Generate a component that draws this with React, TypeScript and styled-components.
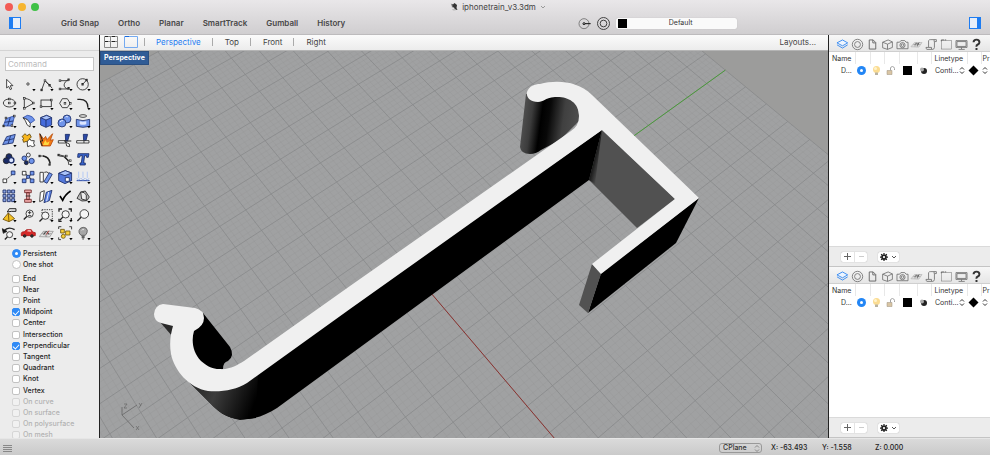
import React from "react";
import styled, { createGlobalStyle, css } from "styled-components";

const GlobalStyle = createGlobalStyle`
  * { box-sizing: border-box; }
  html, body { margin: 0; padding: 0; }
  body {
    font-family: Inter, "Liberation Sans", sans-serif;
    font-size: 8px;
    line-height: 10px;
    color: #333;
    background: #ececec;
  }
  button, input, select { font: inherit; color: inherit; margin: 0; }
  button { border: 0; padding: 0; background: none; }
  svg { display: block; }
`;

/* ---------- window frame ---------- */

const Window = styled.div`
  display: flex;
  flex-direction: column;
  height: 100vh;
  overflow: hidden;
`;

const Header = styled.header`
  flex: none;
  height: 35px;
  background: linear-gradient(#e9e7e9, #d0ced0);
  border-bottom: 1px solid #bdbbbd;
`;

const TitleBar = styled.div`
  display: grid;
  grid-template-columns: 1fr auto 1fr;
  align-items: center;
  height: 13px;
  padding: 0 5px;
`;

const Lights = styled.div`
  display: flex;
  gap: 5px;
`;

const Light = styled.button<{ $color: string }>`
  width: 8px;
  height: 8px;
  border-radius: 50%;
  background: ${(p) => p.$color};
`;

const Title = styled.h1`
  display: flex;
  align-items: center;
  gap: 4px;
  margin: 0;
  padding-left: 6px;
  font-size: 8px;
  font-weight: 400;
  line-height: 12px;
  color: #444;
`;

const Toolbar = styled.div`
  display: flex;
  align-items: center;
  height: 20px;
  padding: 0 9px;
`;

const Toggles = styled.nav`
  display: flex;
  gap: 19px;
  margin-left: 40px;
`;

const TextButton = styled.button`
  font-weight: 600;
  color: #484848;
`;

const Spacer = styled.div`
  flex: 1;
`;

const CurrentLayer = styled.div`
  display: flex;
  align-items: center;
  gap: 6px;
`;

const LayerButton = styled.button`
  display: grid;
  grid-template-columns: 9px 1fr;
  align-items: center;
  width: 121px;
  height: 11px;
  padding: 0 2px;
  border-radius: 2px;
  background: #fafafa;
  box-shadow: 0 0 1px #aaa;
  font-size: 7px;
`;

const Swatch = styled.span`
  display: block;
  width: 9px;
  height: 9px;
  background: #000;
`;

const Body = styled.div`
  display: flex;
  flex: 1;
  min-height: 0;
`;

/* ---------- left sidebar ---------- */

const Sidebar = styled.aside`
  display: flex;
  flex-direction: column;
  flex: none;
  width: 100px;
  overflow: hidden;
  background: #ececec;
  border-right: 1px solid #222;
`;

const SidebarTop = styled.div`
  flex: none;
  height: 16px;
  background: linear-gradient(#fafafa, #ededed);
  border-bottom: 1px solid #d4d4d4;
`;

const CommandInput = styled.input`
  flex: none;
  height: 14px;
  margin: 6px 5px 4px;
  padding: 0 2px;
  border: 1px solid #c6c6c6;
  border-radius: 0;
  background: #fff;
  font-size: 8px;
  outline: none;
  &::placeholder { color: #bbb; opacity: 1; }
`;

const ToolGrid = styled.div`
  flex: none;
  display: grid;
  grid-template-columns: repeat(5, 1fr);
  grid-auto-rows: 1fr;
  height: 168px;
  margin-right: 6px;
`;

const ToolButton = styled.button`
  display: grid;
  place-items: center;
  min-width: 0;
  min-height: 0;
  svg { width: 100%; height: 100%; overflow: visible; }
`;

const Snaps = styled.div`
  display: flex;
  flex-direction: column;
  flex: 1;
  min-height: 0;
  overflow: hidden;
  margin-top: 2px;
  padding: 2px 0 0 12px;
  border-top: 1px solid #dcdcdc;
`;

const SnapList = styled.div<{ $height: number }>`
  flex: none;
  display: grid;
  grid-auto-rows: 1fr;
  height: ${(p) => p.$height}px;
  margin-bottom: 3px;
`;

const SnapLabel = styled.label<{ $off?: boolean }>`
  display: flex;
  align-items: center;
  gap: 3px;
  font-size: 7px;
  font-weight: 500;
  color: ${(p) => (p.$off ? "#b2b2b2" : "#262626")};
`;

const tick = css`
  appearance: none;
  flex: none;
  width: 8px;
  height: 8px;
  border: 1px solid #c2c2c2;
  background: #fff;
  &:disabled { background-color: #f1f1f1; border-color: #d6d6d6; }
`;

const Check = styled.input`
  ${tick}
  display: grid;
  place-items: center;
  border-radius: 2px;
  &:checked { background-color: #2f8af5; border-color: #2f8af5; }
  &:checked::before {
    content: "";
    width: 5px;
    height: 3px;
    border: solid #fff;
    border-width: 0 0 1px 1px;
    transform: rotate(-48deg);
  }
`;

const Radio = styled.input`
  ${tick}
  display: grid;
  place-items: center;
  width: 9px;
  height: 9px;
  margin-right: -1px;
  border-radius: 50%;
  &:checked { background-color: #2f8af5; border-color: #2f8af5; }
  &:checked::before {
    content: "";
    width: 3px;
    height: 3px;
    border-radius: 50%;
    background: #fff;
  }
`;

/* ---------- viewport ---------- */

const Center = styled.main`
  display: flex;
  flex-direction: column;
  flex: 1;
  min-width: 0;
`;

const Tabs = styled.div`
  display: flex;
  align-items: center;
  flex: none;
  height: 16px;
  padding: 0 12px 1px 4px;
  background: linear-gradient(#fbfbfb, #ececec);
  border-bottom: 1px solid #b4b4b4;
  & > button + button { margin-left: 6px; }
`;

const Tab = styled.button<{ $active?: boolean }>`
  color: ${(p) => (p.$active ? "#1d7cf2" : "#444")};
`;

const Divider = styled.span`
  width: 1px;
  height: 8px;
  margin: 0 12px 0 11px;
  background: #aaa;
  &:first-of-type { margin-left: 6px; margin-right: 11px; }
`;

const View = styled.div`
  position: relative;
  flex: 1;
  min-height: 0;
  background: #9c9c9b;
`;

const Scene = styled.svg`
  width: 100%;
  height: 100%;
`;

const ViewLabel = styled.span`
  position: absolute;
  top: 0;
  left: 0;
  padding: 1px 3px;
  border: 1px solid #2b4f80;
  background: #305c96;
  color: #fff;
  font-size: 7px;
  font-weight: 700;
`;

/* ---------- right panels ---------- */

const Panels = styled.aside`
  display: flex;
  flex-direction: column;
  flex: none;
  width: 162px;
  overflow: hidden;
  background: #fff;
  border-left: 1px solid #222;
`;

const Panel = styled.section<{ $share: number }>`
  display: flex;
  flex-direction: column;
  flex: ${(p) => p.$share} 1 0;
  min-height: 0;
`;

const PanelTabs = styled.div`
  display: flex;
  align-items: center;
  justify-content: space-between;
  flex: none;
  height: 17px;
  padding: 2px 7px 0 7px;
  background: linear-gradient(#f7f7f7, #e6e6e6);
  border-bottom: 1px solid #cfcfcf;
  svg { width: 13px; height: 13px; }
`;

const PanelContent = styled.div`
  flex: 1;
  min-height: 0;
  overflow: hidden;
  background: #fff;
`;

const LayerTable = styled.table`
  width: 100%;
  table-layout: fixed;
  border-collapse: collapse;
  font-size: 7px;
  line-height: 9px;
`;

const Th = styled.th`
  height: 12px;
  padding: 0 0 0 3px;
  border-right: 1px solid #e8e8e8;
  font-weight: 400;
  text-align: left;
  white-space: nowrap;
  overflow: hidden;
  &:last-child { padding-left: 1px; border-right: 0; }
`;

const Td = styled.td<{ $indent?: number }>`
  height: 13px;
  padding: 0 0 0 ${(p) => p.$indent ?? 3}px;
  white-space: nowrap;
  svg { width: 11px; height: 11px; }
`;

const LineCell = styled.div`
  display: flex;
  align-items: center;
  justify-content: space-between;
  padding-right: 2px;
`;

const StepperDrawing = styled.svg`
  && {
    flex: none;
    width: 6px;
    height: 9px;
  }
`;

const PanelFooter = styled.footer`
  display: flex;
  align-items: center;
  gap: 11px;
  flex: none;
  height: 21px;
  padding-left: 12px;
  background: #ececec;
  border-top: 1px solid #dadada;
  border-bottom: 1px solid #c4c4c4;
`;

const ButtonPair = styled.div`
  display: flex;
  height: 10px;
  border-radius: 2px;
  background: #fff;
  box-shadow: 0 0 1px #999;
`;

const FooterButton = styled.button<{ $wide?: boolean }>`
  display: flex;
  align-items: center;
  justify-content: center;
  gap: 3px;
  width: ${(p) => (p.$wide ? 21 : 13)}px;
  height: 10px;
  & + & { border-left: 1px solid #e4e4e4; }
`;

/* ---------- status bar ---------- */

const StatusBar = styled.footer`
  display: flex;
  align-items: center;
  flex: none;
  height: 17px;
  padding: 2px 3px 0;
  background: linear-gradient(#dadada, #cacaca);
  border-top: 1px solid #e6e6e6;
  font-size: 7px;
  font-weight: 500;
`;

const PlanePicker = styled.label`
  display: flex;
  align-items: center;
  width: 43px;
  height: 10px;
  margin-left: auto;
  margin-right: 9px;
  padding: 0 1px 0 3px;
  border: 1px solid #999;
  border-radius: 3px;
  select {
    appearance: none;
    flex: 1;
    min-width: 0;
    padding: 0;
    border: 0;
    background: none;
    outline: none;
  }
`;

const Coord = styled.output<{ $width: number }>`
  width: ${(p) => p.$width}px;
  color: #222;
`;

/* ---------- drawings: construction plane grid ---------- */

const ORIGIN = { x: 425, y: 286 };
const VANISH_U = { x: -880, y: -1250 };
const VANISH_V = { x: 2562, y: -1250 };
const STEP_U = -0.01452;
const STEP_V = 0.01168;
const EXTENT = 14;

function project(u: number, v: number) {
  const a = STEP_U * u;
  const b = STEP_V * v;
  const w = 1 + a + b;
  const x = (ORIGIN.x + a * VANISH_U.x + b * VANISH_V.x) / w;
  const y = (ORIGIN.y + a * VANISH_U.y + b * VANISH_V.y) / w;
  return `${x.toFixed(2)} ${y.toFixed(2)}`;
}

const segment = (u1: number, v1: number, u2: number, v2: number) =>
  `M${project(u1, v1)}L${project(u2, v2)}`;

function gridLines(major: boolean) {
  let d = "";
  for (let i = -EXTENT * 5; i <= EXTENT * 5; i++) {
    if ((i % 5 === 0) !== major) continue;
    const t = i / 5;
    d += segment(t, -EXTENT, t, EXTENT) + segment(-EXTENT, t, EXTENT, t);
  }
  return d;
}

const MINOR = gridLines(false);
const MAJOR = gridLines(true);
const PLANE = `M${project(-14, -14)}L${project(-14, 14)}L${project(14, 14)}L${project(14, -14)}Z`;

function Model() {
  return (
    <Scene viewBox="100 51 728 387" preserveAspectRatio="xMidYMid slice" role="img" aria-label="Perspective view of the clip model">
      <defs>
        <linearGradient id="tube" gradientUnits="userSpaceOnUse" x1="522" y1="120" x2="580" y2="128">
          <stop offset="0" stopColor="#505050" />
          <stop offset=".15" stopColor="#3c3c3c" />
          <stop offset=".32" stopColor="#000" />
          <stop offset=".45" stopColor="#080808" />
          <stop offset=".7" stopColor="#404040" />
          <stop offset="1" stopColor="#505050" />
        </linearGradient>
        <linearGradient id="bend" gradientUnits="userSpaceOnUse" x1="200" y1="385" x2="254" y2="405">
          <stop offset="0" stopColor="#2c2c2c" />
          <stop offset=".3" stopColor="#3c3c3c" />
          <stop offset="1" stopColor="#000" />
        </linearGradient>
        <linearGradient id="sliver" gradientUnits="userSpaceOnUse" x1="592" y1="160" x2="600" y2="162">
          <stop offset="0" stopColor="#080808" />
          <stop offset="1" stopColor="#484848" />
        </linearGradient>
      </defs>
      <path d={PLANE} fill="#a0a1a2" />
      <path d={MINOR} fill="none" stroke="#929394" strokeWidth=".5" opacity=".5" />
      <path d={MAJOR} fill="none" stroke="#88898a" strokeWidth=".8" />
      <path d={segment(0, 0, 14, 0)} stroke="#8c3330" strokeWidth="1" />
      <path d={segment(0, 0, 0, 14)} stroke="#4a9a3a" strokeWidth="1" />

      <path d="M526 94 520 147Q521 154 530 154 536 154 541 150L560 140 580 120 577 104 565 96 548 97Z" fill="url(#tube)" />
      <path d="M602 130 675 199 637 228 589 180Z" fill="#515151" />
      <path d="M602 130 589 180 595 184Z" fill="url(#sliver)" />
      <path d="M602 130 589 180 277 408C262 418 243 423 227 416 220 413 215 408 210 403L188 381 246 378 350 305Z" fill="#000" />
      <path d="M188 381 210 403C217 411 225 417 240 420L256 418 258 374 230 386Z" fill="url(#bend)" />
      <path d="M160 322 172 336 176 322Z" fill="#292929" />
      <path d="M203 313 230 347Q235 356 228 361 223 362 223 369L205 370 188 350 192 328Z" fill="#000" />
      <path d="M601 273 699 198 676 243 588 313Z" fill="#000" />
      <path d="M592 264 601 274 588 313 579 305Z" fill="#525252" />
      <path
        d="M163 304 195 308Q204 310 204 318 204 326 194 331C191 341 193 353 201 361 208 367 213 369 219 369 230 370 237 365 244 361L350 286 571 131Q579 126 579 116C579 101 566 96 555 97 544 98 544 102 538 102 530 102 526 97 527 92 529 86 535 84 540 84 555 80 577 80 592 95L699 198 601 274 592 264 675 199 602 130 350 309 247 383C236 390 222 392 208 391 189 388 174 370 171 354 169 342 171 333 173 326L161 323Q154 321 154 314 155 305 163 304Z"
        fill="#f0f0f0"
      />
      <g fill="none" stroke="#666" strokeWidth=".8">
        <path d="M122 407V415L137 405M122 415 134 428" />
        <path d="M124 404h3l-3 4h3M139 403l2 3M142 403l-3 5M136 426l3 4M139 426l-3 4" strokeWidth=".7" />
      </g>
    </Scene>
  );
}

/* ---------- drawings: small icons ---------- */

const SidebarIcon = ({ right }: { right?: boolean }) => (
  <svg width="12" height="12" viewBox="0 0 12 12">
    <rect x=".5" y=".5" width="11" height="11" fill="#e6eefa" stroke="#1d7cf2" />
    <rect x={right ? 8 : 0} y="0" width="4" height="12" fill="#1d7cf2" />
  </svg>
);

const Caret = ({ color = "#555" }: { color?: string }) => (
  <svg width="6" height="6" viewBox="0 0 6 6" fill="none" stroke={color}>
    <path d="m1 2 2 2 2-2" />
  </svg>
);

const Stepper = ({ color = "#333" }: { color?: string }) => (
  <StepperDrawing viewBox="0 0 6 9" fill="none" stroke={color} strokeWidth="1">
    <path d="m1 3.500 2-2 2 2M1 5.500l2 2 2-2" />
  </StepperDrawing>
);

const Gear = () => (
  <svg width="8" height="8" viewBox="0 0 16 16" stroke="#222" fill="none">
    <circle cx="8" cy="8" r="4" strokeWidth="3.500" />
    <path d="M8 0v3M8 13v3M0 8h3M13 8h3M2.300 2.300l2 2M11.700 11.700l2 2M2.300 13.700l2-2M11.700 4.300l2-2" strokeWidth="2.500" />
  </svg>
);

const BLUE = "#6f94ea";
const DEEP = "#2b4aa8";
const NAVY = "#1a2b66";
const Drop = () => <path d="M40 42h10l-5 7z" fill="#000" stroke="none" />;
const Nodes = ({ at }: { at: [number, number][] }) => (
  <g fill="#fff" stroke="#222" strokeWidth="2">
    {at.map(([x, y], i) => (
      <rect key={i} x={x - 2.5} y={y - 2.5} width="5" height="5" />
    ))}
  </g>
);
const Lens = ({ x, y, r = 11 }: { x: number; y: number; r?: number }) => (
  <>
    <path d={`M${x - r * 0.7} ${y + r * 0.7}L${x - r * 1.6} ${y + r * 1.6}`} strokeWidth="4" />
    <circle cx={x} cy={y} r={r} fill="#f6f6f6" strokeWidth="2.500" />
  </>
);

type Tool = { name: string; menu?: boolean; art: React.ReactNode };

const TOOLS: Tool[] = [
  { name: "Select", art: <path d="M20 13v26l6-5 5 10 4-2-4-10h8z" fill="#fff" /> },
  { name: "Point", menu: true, art: <circle cx="27" cy="27" r="3.500" fill="#fff" /> },
  { name: "Polyline", menu: true, art: <><path d="M14 45 24 17 38 31 46 40" /><path d="M24 17l14 14" /><Nodes at={[[14, 45], [24, 17], [38, 31]]} /></> },
  { name: "Curve", menu: true, art: <><path d="M12 17h26M38 14C22 20 18 40 38 42M12 42h26" /><Nodes at={[[12, 17], [38, 14], [12, 42], [38, 40]]} /></> },
  { name: "Circle", menu: true, art: <><circle cx="26" cy="28" r="17" /><path d="M26 28 38 15" /><Nodes at={[[26, 28], [38, 15]]} /></> },
  { name: "Ellipse", menu: true, art: <><ellipse cx="28" cy="27" rx="18" ry="12" /><Nodes at={[[28, 27], [28, 15], [45, 27]]} /></> },
  { name: "Arc", menu: true, art: <><path d="M16 13v30M16 13q20 2 27 15M16 43l27-15" /><Nodes at={[[16, 13], [16, 43], [43, 27]]} /></> },
  { name: "Rectangle", menu: true, art: <><rect x="12" y="18" width="31" height="20" /><Nodes at={[[12, 38], [43, 18]]} /></> },
  { name: "Polygon", menu: true, art: <><path d="M19 14h15l9 14-9 13H19l-8-13z" /><Nodes at={[[27, 28], [43, 28]]} /></> },
  { name: "Fillet", menu: true, art: <path d="M10 16h8q24 0 24 25" strokeWidth="4" /> },
  { name: "Surface", menu: true, art: <><path d="M18 20 44 11 36 42 10 42z" fill={BLUE} stroke={DEEP} /><path d="M14 31 40 27M31 16 23 42" stroke={NAVY} /><Nodes at={[[18, 18], [43, 12], [11, 42], [36, 41]]} /></> },
  { name: "Sweep", menu: true, art: <><path d="M12 17 25 10q18 2 22 15L34 34q-6-13-22-17z" fill={BLUE} stroke={DEEP} /><path d="M34 34 33 45 24 38Q21 26 12 17q15 3 22 17z" fill="#fff" /></> },
  { name: "Box", menu: true, art: <><path d="M11 17 29 10l15 7v22L27 46 11 39z" fill="#466cdc" stroke={NAVY} /><path d="M11 17 29 10l15 7-17 7z" fill="#a9c2fa" stroke={NAVY} /><path d="M27 24v22" stroke={NAVY} /></> },
  { name: "Boolean", menu: true, art: <><circle cx="33" cy="21" r="12" fill={BLUE} stroke={NAVY} /><circle cx="18" cy="33" r="12" fill={BLUE} stroke={NAVY} /><path d="M12 30q4-5 9-4M29 15q4-3 7 0" stroke="#fff" /></> },
  { name: "Patch", menu: true, art: <><ellipse cx="27" cy="12" rx="11" ry="4" /><path d="M7 22q20 8 40 0v21q-20 6-40 0z" fill={BLUE} stroke={NAVY} /><path d="M17 28v9q10 3 20 0v-9q-10 3-20 0z" fill="#dce6ff" stroke="none" /></> },
  { name: "Plane", menu: true, art: <><path d="M8 41 20 17 46 10 39 36z" fill={BLUE} stroke={NAVY} /><path d="M14 29 42 23M32 14 24 39" stroke={NAVY} /></> },
  { name: "Join", art: <><path d="M9 17 18 8l6 6 8-5 5 9-5 5 4 7-8 6-6-5-8 3-3-9 4-3z" fill="#f6b51e" stroke="#5b4009" /><path d="M25 30l7-5 6 4 8 0-2 8 4 7-8 3-6-3-8 3-1-8z" fill="#fff" /></> },
  { name: "Explode", art: <><path d="M8 8 20 24 26 16l4 10L47 8 40 28l9-2-9 19H14l-4-15z" fill="#f37a16" stroke="#b94d0b" /><path d="M9 8 17 30 10 30l6 15" stroke="#222" strokeWidth="3" /><path d="M18 42l7-15 5 8 8-4-4 11z" fill="#ffd83f" stroke="none" /></> },
  { name: "Trim", art: <><path d="M28 10h13L35 30h-6z" fill={DEEP} stroke={NAVY} /><path d="M7 29h22v7H7z" fill="#fff" /><path d="M30 34l10 5 1 8-9-2z" fill="#fff" /><path d="M24 30h22" strokeWidth="3" /></> },
  { name: "Split", art: <><path d="M28 10h13L36 29h-7z" fill={DEEP} stroke={NAVY} /><path d="M8 29h37v7H8z" fill="#fff" /><path d="M30 29v7" /></> },
  { name: "Group", menu: true, art: <><circle cx="27" cy="20" r="9" fill={NAVY} /><circle cx="19" cy="32" r="9" fill={NAVY} /><circle cx="34" cy="31" r="8" fill="#dce6ff" stroke={NAVY} strokeWidth="4" /></> },
  { name: "Ungroup", art: <><circle cx="28" cy="15" r="6" fill="#eef2ff" /><circle cx="16" cy="25" r="7" fill={BLUE} stroke={NAVY} /><circle cx="22" cy="38" r="6" fill={NAVY} /><circle cx="38" cy="33" r="8" fill={BLUE} stroke={NAVY} /></> },
  { name: "Match", art: <><path d="M8 18q26-4 31 24" /><path d="M18 18q18 2 22 22" strokeWidth="4" /><Nodes at={[[8, 18], [38, 44]]} /></> },
  { name: "Edit points", menu: true, art: <><path d="M8 14 32 20M10 18q27 0 29 27" /><path d="M26 22 38 32" strokeWidth="4" /><Nodes at={[[8, 15], [31, 18], [43, 32]]} /></> },
  { name: "Text", art: <path d="M12 11h33l-2 11h-5v-5h-6l-3 22h5v6H18v-6h4l3-22h-6l-2 5h-6z" fill="#3864cc" stroke={NAVY} /> },
  { name: "Move", menu: true, art: <><path d="M15 38 42 15" strokeDasharray="4 2" /><path d="M9 33h11v11H9z" fill="#fff" /><path d="M34 9h11v11H34z" fill={BLUE} stroke={NAVY} /></> },
  { name: "Copy", art: <><path d="M18 16 42 38M16 38 40 16" /><path d="M10 10h11v11H10z" fill="#fff" /><path d="M10 33h11v11H10zM34 10h11v11H34zM34 33h11v11H34zM23 22h9v9h-9z" fill={BLUE} stroke={NAVY} /></> },
  { name: "Rotate", menu: true, art: <><path d="M9 13h10v29H9z" fill="#fff" /><path d="M37 14l9 5-16 27-9-5z" fill={BLUE} stroke={NAVY} /><path d="M22 13q8-4 14 3" /></> },
  { name: "Scale", menu: true, art: <><path d="M8 16 28 8l19 7v23L27 47 8 38z" fill="#5479dc" stroke={NAVY} /><path d="M8 16 28 8l19 7-20 8z" fill="#a9c2fa" stroke={NAVY} /><path d="M28 29h12v11H28z" fill="#fff" stroke={NAVY} /></> },
  { name: "Project", menu: true, art: <><path d="M14 11v19M27 11v19M40 11v19" stroke="#b5caf5" strokeWidth="3" /><path d="M8 38h39" stroke={DEEP} strokeWidth="3" /><path d="M9 31l5 6 5-6M22 31l5 6 5-6M35 31l5 6 5-6" stroke="#88a8ec" /></> },
  { name: "Array", menu: true, art: <g fill="#8fa8e6" stroke={NAVY}>{[9, 22, 35].map((x) => [9, 22, 35].map((y) => <path key={`${x}-${y}`} d={`M${x} ${y}h9v9h-9z`} />))}</g> },
  { name: "Align", menu: true, art: <g stroke="#6e2525" fill="#f0aaaa"><path d="M17 9h20v8H17zM23 17h8v21h-8zM17 37h20v9H17z" /><path d="M20 27h15" stroke="#222" /></g> },
  { name: "Mirror", menu: true, art: <><path d="M10 16 22 11 18 39l-10 5z" fill="#fff" /><path d="M28 16 45 10 37 41 21 47z" fill="#5c83e6" stroke={NAVY} /><path d="M35 15 29 43" stroke="#fff" /></> },
  { name: "Check", menu: true, art: <path d="M12 27 20 40Q28 22 44 12" stroke="#000" strokeWidth="5" /> },
  { name: "Shade", menu: true, art: <><path d="M9 34 20 15l14-3 12 18-7 11-15 1z" fill="#bcbcbc" /><path d="M20 15 23 36l14 4V24q-5-10-17-9z" fill="#eee" /></> },
  { name: "Render", menu: true, art: <><path d="M9 40 25 21 44 38 27 47z" fill="#f4c224" stroke="#6a4b08" /><path d="M25 21l2 26" stroke="#6a4b08" /><path d="M22 18 28 8h20v8H34z" fill="#eee" stroke="#222" strokeWidth="3" /></> },
  { name: "Zoom dynamic", art: <><Lens x={32} y={23} /><path d="M27 20h10M32 15v10M27 29h10" /></> },
  { name: "Zoom window", menu: true, art: <><path d="M15 11h31v30H36M15 11v10" strokeDasharray="4 3" /><Lens x={25} y={29} /></> },
  { name: "Zoom extents", menu: true, art: <><path d="M9 17V9h9M38 9h8v8M9 38v8h8M46 36v8" strokeWidth="4" /><Lens x={29} y={25} /></> },
  { name: "Zoom selected", art: <Lens x={31} y={24} r={13} /> },
  { name: "Undo view", menu: true, art: <><path d="M12 21Q24 6 44 17" strokeWidth="4" /><path d="M7 14l3 14 11-6z" fill="#111" /><Lens x={29} y={32} r={9} /></> },
  { name: "Vehicle", art: <><path d="M7 28q0-5 9-5l7-6h14l4 7 8 2v9H7z" fill="#d62929" stroke="#a81616" /><path d="M24 22l3-3h8l2 4z" fill="#f7dada" stroke="none" /><circle cx="17" cy="36" r="4" fill="#333" /><circle cx="39" cy="36" r="4" fill="#333" /></> },
  { name: "Named plane", menu: true, art: <><path d="M7 38 19 22h30L38 39z" fill="#e2e2e2" stroke="#999" /><path d="M14 29h30M20 22l7 17M33 22l-5 17" stroke="#999" /><path d="M20 32q8-18 16 0" /><path d="M28 32l8-12" stroke="#b33" /></> },
  { name: "Hide", menu: true, art: <><path d="M14 16h11v11H14zM29 21h13v12H29z" fill="#f6cf38" stroke="#6b5412" /><circle cx="22" cy="37" r="6" fill="#f6cf38" stroke="#6b5412" /><path d="M8 15V8h8M40 8h7v8M8 40v7h7" /></> },
  { name: "Lights", menu: true, art: <><path d="M21 34q-8-7-6-14 3-10 13-10t12 9q1 8-6 15z" fill="#a6a6a6" stroke="#555" /><path d="M23 37h9M23 41h9M25 45h5" stroke="#444" strokeWidth="3" /><path d="M23 19q3-4 7-2" stroke="#eee" /></> },
];

const PANEL_ICONS: { name: string; art: React.ReactNode }[] = [
  { name: "Layers", art: <g stroke="#1d7cf2"><path d="M3 15 20 6l16 9-16 9z" fill="#edf5ff" /><path d="M3 21 20 31l16-10" /></g> },
  { name: "Object", art: <><circle cx="20" cy="20" r="16" /><circle cx="20" cy="20" r="9" /></> },
  { name: "Page", art: <path d="M10 6h12l8 8v20H10zM21 6v9h9" strokeWidth="3" /> },
  { name: "Box", art: <path d="M5 13 22 6l13 6v17L20 35 5 30zM5 13l15 6 15-7M20 19v16" /> },
  { name: "Camera", art: <><path d="M3 13h8l4-5h12l4 5h6v20H3z" /><circle cx="20" cy="22" r="8" /><circle cx="20" cy="22" r="4" /></> },
  { name: "Plane", art: <><path d="M3 27 14 14h23L27 28z" fill="#ddd" stroke="#bbb" /><path d="M10 20h22M19 14l-4 13M27 14l-5 14" stroke="#aaa" /><path d="M14 21q5-8 12-2M22 24l6-10" stroke="#555" /></> },
  { name: "Script", art: <path d="M11 8q3-4 7-3h17v6h-6v18q-1 6-5 6H6q-3-1-3-6h8V8M28 11V5M11 29h9v5" /> },
  { name: "Viewport", art: <><rect x="4" y="7" width="31" height="27" strokeWidth="1.500" /><path d="M4 10V6h9M15 6h4" strokeWidth="3" /></> },
  { name: "Display", art: <path d="M3 8h34v21H3zM6 11h28v15H6zM20 29v5M11 35h19" /> },
  { name: "Help", art: <path d="M11 13q0-8 9-8t9 8q0 5-5 7t-4 7M20 31v6" stroke="#333" strokeWidth="6" /> },
];

function LayerPanel({ share }: { share: number }) {
  return (
    <Panel $share={share}>
      <PanelTabs>
        {PANEL_ICONS.map((icon) => (
          <button key={icon.name} aria-label={icon.name}>
            <svg viewBox="0 0 40 40" fill="none" stroke="#6c6c6c" strokeWidth="2.500">{icon.art}</svg>
          </button>
        ))}
      </PanelTabs>
      <PanelContent>
        <LayerTable>
          <colgroup>
            {[26, 15, 14, 15, 18, 14, 36, 14].map((w, i) => <col key={i} width={w} />)}
            <col />
          </colgroup>
          <thead>
            <tr>
              <Th>Name</Th><Th /><Th /><Th /><Th /><Th /><Th>Linetype</Th><Th /><Th>Pr</Th>
            </tr>
          </thead>
          <tbody>
            <tr>
              <Td $indent={12}>D...</Td>
              <Td $indent={1}><svg viewBox="0 0 22 22"><circle cx="11" cy="11" r="9" fill="#2386f5" /><circle cx="11" cy="11" r="3" fill="#fff" /></svg></Td>
              <Td $indent={1}><svg viewBox="0 0 22 22"><circle cx="11" cy="9" r="7" fill="#fbdc91" /><path d="M8 15h6v5H8z" fill="#b9b2a0" /><circle cx="9" cy="7" r="3" fill="#fff3cd" /></svg></Td>
              <Td $indent={1}><svg viewBox="0 0 22 22"><path d="M4 11h10v8H4z" fill="#d9c5a4" stroke="#9d907c" /><path d="M11 11V6q1-3 4-3t4 4v3" fill="none" stroke="#a3a3a3" strokeWidth="2" /></svg></Td>
              <Td $indent={4}><Swatch /></Td>
              <Td $indent={1}><svg viewBox="0 0 22 22"><circle cx="12" cy="12" r="6" fill="#222" /><circle cx="8" cy="9" r="4" fill="#aaa" /></svg></Td>
              <Td $indent={4}><LineCell>Conti...<Stepper /></LineCell></Td>
              <Td $indent={1}><svg viewBox="0 0 22 22"><path d="M11 1 21 11 11 21 1 11z" /></svg></Td>
              <Td $indent={1}><Stepper /></Td>
            </tr>
          </tbody>
        </LayerTable>
      </PanelContent>
      <PanelFooter>
        <ButtonPair>
          <FooterButton aria-label="Add layer"><svg width="7" height="7" viewBox="0 0 7 7" stroke="#666"><path d="M0 3.500h7M3.500 0v7" /></svg></FooterButton>
          <FooterButton aria-label="Remove layer"><svg width="7" height="7" viewBox="0 0 7 7" stroke="#ccc"><path d="M1 3.500h5" /></svg></FooterButton>
        </ButtonPair>
        <ButtonPair>
          <FooterButton $wide aria-label="Layer options"><Gear /><Caret /></FooterButton>
        </ButtonPair>
      </PanelFooter>
    </Panel>
  );
}

const SNAPS = ["End", "Near", "Point", "Midpoint", "Center", "Intersection", "Perpendicular", "Tangent", "Quadrant", "Knot", "Vertex", "On curve", "On surface", "On polysurface", "On mesh"];

export default function App() {
  return (
    <Window>
      <GlobalStyle />
      <Header>
        <TitleBar>
          <Lights>
            <Light $color="#f35b55" aria-label="Close" />
            <Light $color="#f6b530" aria-label="Minimize" />
            <Light $color="#3fc146" aria-label="Zoom" />
          </Lights>
          <Title>
            <svg width="8" height="9" viewBox="0 0 16 18"><path d="M1 3l5 2 3-3 5 4-1 6 2 4-5-1-2-4-5-1 3-2-4-2 2-1z" fill="#333" /><path d="M4 14h7v3H6z" fill="#bbb" /></svg>
            iphonetrain_v3.3dm
            <Caret color="#999" />
          </Title>
        </TitleBar>
        <Toolbar>
          <button aria-label="Toggle left sidebar"><SidebarIcon /></button>
          <Toggles>
            {["Grid Snap", "Ortho", "Planar", "SmartTrack", "Gumball", "History"].map((t) => <TextButton key={t}>{t}</TextButton>)}
          </Toggles>
          <Spacer />
          <CurrentLayer>
            <button aria-label="Record history">
              <svg width="13" height="13" viewBox="0 0 39 39" fill="none" stroke="#555" strokeWidth="2"><circle cx="18" cy="20" r="15" /><circle cx="18" cy="20" r="3" stroke="#111" strokeWidth="3" /><path d="M21 20h17" stroke="#111" strokeWidth="3" /></svg>
            </button>
            <button aria-label="Filter">
              <svg width="13" height="13" viewBox="0 0 39 39" fill="none" stroke="#444" strokeWidth="3"><circle cx="19.500" cy="19.500" r="18" /><circle cx="19.500" cy="19.500" r="10" /></svg>
            </button>
            <LayerButton><Swatch /><span>Default</span></LayerButton>
          </CurrentLayer>
          <Spacer />
          <button aria-label="Toggle right sidebar"><SidebarIcon right /></button>
        </Toolbar>
      </Header>
      <Body>
        <Sidebar>
          <SidebarTop />
          <CommandInput placeholder="Command" aria-label="Command" />
          <ToolGrid>
            {TOOLS.map((tool) => (
              <ToolButton key={tool.name} aria-label={tool.name}>
                <svg viewBox="0 0 56 56" fill="none" stroke="#222" strokeWidth="2.500">
                  {tool.art}
                  {tool.menu && <Drop />}
                </svg>
              </ToolButton>
            ))}
          </ToolGrid>
          <Snaps>
            <SnapList $height={22}>
              <SnapLabel><Radio type="radio" name="mode" defaultChecked />Persistent</SnapLabel>
              <SnapLabel><Radio type="radio" name="mode" />One shot</SnapLabel>
            </SnapList>
            <SnapList $height={168}>
              {SNAPS.map((s) => {
                const off = s.startsWith("On ");
                return (
                  <SnapLabel key={s} $off={off}>
                    <Check type="checkbox" disabled={off} defaultChecked={s === "Midpoint" || s === "Perpendicular"} />
                    {s}
                  </SnapLabel>
                );
              })}
            </SnapList>
          </Snaps>
        </Sidebar>
        <Center>
          <Tabs>
            <button aria-label="Four views">
              <svg width="14" height="12" viewBox="0 0 14 12" fill="none" stroke="#888"><path d="M.5.5h13v11H.5zM6.500 .5v11M.5 5.500h13" /><path d="M1 .5h3M8 .5h3M1 5.500h3M8 5.500h3" stroke="#222" /></svg>
            </button>
            <button aria-label="Single view">
              <svg width="14" height="12" viewBox="0 0 14 12" fill="none" stroke="#75aaf0"><path d="M.5.5h13v11H.5z" /><path d="M1 .5h4" stroke="#1668dc" /></svg>
            </button>
            <Divider />
            <Tab $active>Perspective</Tab>
            <Divider />
            <Tab>Top</Tab>
            <Divider />
            <Tab>Front</Tab>
            <Divider />
            <Tab>Right</Tab>
            <Spacer />
            <Tab>Layouts...</Tab>
          </Tabs>
          <View>
            <Model />
            <ViewLabel>Perspective</ViewLabel>
          </View>
        </Center>
        <Panels>
          <LayerPanel share={232} />
          <LayerPanel share={171} />
        </Panels>
      </Body>
      <StatusBar>
        <button aria-label="Menu">
          <svg width="9" height="7" viewBox="0 0 9 7" stroke="#888"><path d="M0 .5h9M0 2.500h9M0 4.500h9M0 6.500h9" /></svg>
        </button>
        <PlanePicker>
          <select aria-label="Coordinate system" defaultValue="CPlane">
            <option>CPlane</option>
            <option>World</option>
          </select>
          <Stepper color="#888" />
        </PlanePicker>
        <Coord $width={51}>X: -63.493</Coord>
        <Coord $width={53}>Y: -1.558</Coord>
        <Coord $width={112}>Z: 0.000</Coord>
      </StatusBar>
    </Window>
  );
}
